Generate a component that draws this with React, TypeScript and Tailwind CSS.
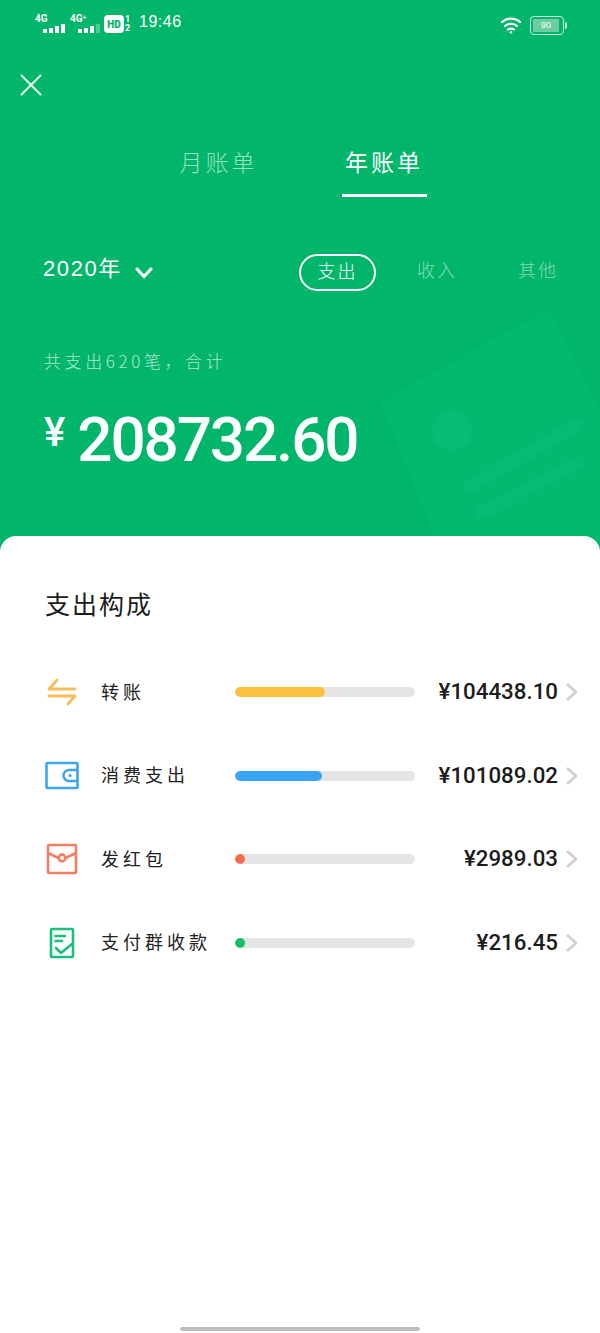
import React from "react";

const CJK = "font-['Noto_Sans_CJK_SC',sans-serif]";

const rows = [
  { name: "转账", amount: "¥104438.10", pct: "w-[50%]", bar: "bg-[#fdbf3f]", icon: "transfer" },
  { name: "消费支出", amount: "¥101089.02", pct: "w-[48.5%]", bar: "bg-[#3aa3f5]", icon: "wallet" },
  { name: "发红包", amount: "¥2989.03", pct: "w-[10px]", bar: "bg-[#f96a4f]", icon: "packet" },
  { name: "支付群收款", amount: "¥216.45", pct: "w-[10px]", bar: "bg-[#14bf6c]", icon: "bill" },
];

const RowIcon = ({ type }: { type: string }) => {
  if (type === "transfer") {
    return (
      <svg width="34" height="30" viewBox="0 0 34 30" fill="none" stroke="#f6bd5c" strokeWidth="2.8" strokeLinecap="round" strokeLinejoin="round">
        <path d="M12 3 L4 12 H30" />
        <path d="M4 19 H30 L23 27" />
      </svg>
    );
  }
  if (type === "wallet") {
    return (
      <svg width="34" height="30" viewBox="0 0 34 30" fill="none" stroke="#3fa4ee" strokeWidth="2.6" strokeLinejoin="round">
        <rect x="1.5" y="2" width="31" height="25" rx="1" />
        <path d="M32 9 H24 A5 5 0 0 0 24 20 H32" />
        <circle cx="25" cy="14.5" r="1.6" fill="#3fa4ee" stroke="none" />
      </svg>
    );
  }
  if (type === "packet") {
    return (
      <svg width="34" height="32" viewBox="0 0 34 32" fill="none" stroke="#f17f63" strokeWidth="2.6" strokeLinejoin="round">
        <rect x="3" y="2" width="28" height="28" rx="1" />
        <path d="M3 10 L13.5 15 M31 10 L20.5 15" />
        <circle cx="17" cy="15" r="3.4" />
      </svg>
    );
  }
  return (
    <svg width="34" height="32" viewBox="0 0 34 32" fill="none" stroke="#1cbf78" strokeWidth="2.6" strokeLinecap="round" strokeLinejoin="round">
      <path d="M28 19 V3 a1 1 0 0 0 -1 -1 H7 a1 1 0 0 0 -1 1 V29 a1 1 0 0 0 1 1 H27 a1 1 0 0 0 1 -1 V19" />
      <path d="M10.5 9 H20 M10.5 14 H17" />
      <path d="M11 21 L16 26 L27 17" />
    </svg>
  );
};

const Signal = ({ label, faded }: { label: string; faded?: boolean }) => (
  <div className="relative h-[20px] w-[32px]">
    <span className="absolute left-0 top-0 font-['Roboto',sans-serif] text-[10px] font-bold leading-[10px] text-white">{label}</span>
    <div className="absolute bottom-[1px] left-[8px] flex items-end gap-[2px]">
      <span className="h-[4px] w-[4px] bg-white" />
      <span className="h-[5px] w-[4px] bg-white" />
      <span className="h-[7px] w-[4px] bg-white" />
      <span className={`h-[9px] w-[4px] ${faded ? "bg-white/30" : "bg-white"}`} />
    </div>
  </div>
);

export default function App() {
  return (
    <div className={`flex h-[1333px] w-[600px] flex-col overflow-hidden bg-white ${CJK}`}>
      <div className="relative h-[550px] shrink-0 overflow-hidden bg-[#01b56b]">
        {/* faint card drawing behind the total */}
        <svg className="absolute left-[370px] top-[300px]" width="230" height="250" viewBox="0 0 230 250" fill="none">
          <path d="M10 102 L172 12 Q178 9 182 16 L230 110 V250 H70 Z" fill="#03b86f" />
          <circle cx="82" cy="130" r="20" fill="#07bc75" />
          <path d="M100 186 L206 126 M112 212 L208 163" stroke="#06bb73" strokeWidth="14" strokeLinecap="round" />
        </svg>

        <div className="relative flex h-[48px] items-center justify-between pl-[35px] pr-[33px]">
          <div className="flex items-center">
            <Signal label="4G" />
            <div className="w-[3px]" />
            <Signal label="4G⁺" faded />
            <span className="ml-[2px] flex h-[18px] w-[20px] items-center justify-center rounded-[4px] bg-white font-['Roboto',sans-serif] text-[10px] font-black text-[#01b56b]">HD</span>
            <span className="ml-[1px] flex w-[7px] flex-col font-['Roboto',sans-serif] text-[9px] font-bold leading-[9px] text-white">
              <span>1</span>
              <span>2</span>
            </span>
            <span className="ml-[7px] mb-[4px] font-['Liberation_Sans',sans-serif] text-[16px] tracking-[0.5px] text-white">19:46</span>
          </div>
          <div className="mt-[2px] flex items-center gap-[8px]">
            <svg width="22" height="18" viewBox="0 0 22 18" fill="none" stroke="white" strokeWidth="2.2" strokeLinecap="round">
              <path d="M2 6 C7 1.5 15 1.5 20 6" />
              <path d="M5 10 C8 7 14 7 17 10" />
              <path d="M8 13.5 C9.5 12.2 12.5 12.2 14 13.5" />
              <circle cx="11" cy="16.3" r="1.2" fill="white" stroke="none" />
            </svg>
            <div className="flex items-center">
              <div className="flex h-[19px] w-[34px] items-center rounded-[4px] border-[1.5px] border-[#c8f5df] p-[2px]">
                <div className="flex h-full w-[26px] items-center justify-center rounded-[1px] bg-[#6bcda0] font-['Liberation_Sans',sans-serif] text-[9px] leading-none text-white">90</div>
              </div>
              <span className="ml-[1px] h-[7px] w-[2px] rounded-r-sm bg-[#c8f5df]" />
            </div>
          </div>
        </div>

        <div className="relative pl-[20px] pt-[26px]">
          <svg width="22" height="22" viewBox="0 0 22 22" fill="none" stroke="#e8fff3" strokeWidth="2" strokeLinecap="round">
            <path d="M1.5 1.5 L20.5 20.5 M20.5 1.5 L1.5 20.5" />
          </svg>
        </div>

        <div className="relative mt-[48px] flex justify-center gap-[84px] pl-[6px]">
          <span className="text-[23px] font-light leading-[34px] tracking-[3px] text-white/60">月账单</span>
          <div className="flex flex-col items-center">
            <span className="text-[23px] leading-[34px] tracking-[3px] text-white">年账单</span>
            <span className="mt-[16px] h-[3px] w-[85px] bg-white" />
          </div>
        </div>

        <div className="relative mt-[53px] flex items-center pl-[43px] pr-[42px]">
          <span className="mb-[9px] font-['Liberation_Sans',sans-serif] text-[22px] tracking-[1.6px] text-white">2020<span className={CJK}>年</span></span>
          <svg className="ml-[12px] mt-[1px]" width="20" height="14" viewBox="0 0 20 14" fill="none" stroke="white" strokeWidth="3.2" strokeLinecap="round" strokeLinejoin="round">
            <path d="M3 3 L10 10.5 L17 3" />
          </svg>
          <div className="ml-auto flex h-[37px] w-[77px] items-center justify-center rounded-full border-2 border-white pb-[3px] text-[18px] font-light tracking-[2px] text-white">支出</div>
          <span className="ml-[41px] mb-[5px] text-[18px] font-light tracking-[2px] text-white/50">收入</span>
          <span className="ml-[61px] mb-[5px] text-[18px] font-light tracking-[2px] text-white/50">其他</span>
        </div>

        <p className="relative mt-[54px] pl-[44px] text-[17px] font-light leading-[26px] tracking-[3.6px] text-white/70">共支出620笔，合计</p>

        <div className="relative mt-[34px] flex items-start pl-[44px]">
          <span className="mt-[4px] font-['Roboto',sans-serif] text-[40px] font-medium leading-[42px] text-white">¥</span>
          <span className="ml-[12px] font-['Roboto',sans-serif] text-[62px] font-medium leading-[64px] tracking-[-2.1px] text-white">208732.60</span>
        </div>
      </div>

      <div className="relative -mt-[14px] flex flex-1 flex-col rounded-t-[16px] bg-white">
        <h2 className="pl-[45px] pt-[49px] text-[25px] font-normal leading-[36px] tracking-[2px] text-[#1c1c1c]">支出构成</h2>
        <div className="mt-[46px] flex flex-col gap-[33.5px]">
          {rows.map((r) => (
            <div key={r.name} className="flex h-[50px] items-center pl-[45px] pr-[21px]">
              <div className="flex w-[34px] shrink-0 justify-center">
                <RowIcon type={r.icon} />
              </div>
              <span className="mb-[2px] ml-[22px] w-[134px] shrink-0 text-[18px] font-normal tracking-[4px] text-[#222]">{r.name}</span>
              <div className="h-[10px] w-[180px] shrink-0 overflow-hidden rounded-full bg-[#e5e5e5]">
                <div className={`h-full rounded-full ${r.pct} ${r.bar}`} />
              </div>
              <span className="flex-1 text-right font-['Roboto',sans-serif] text-[22.3px] font-medium text-[#1c1c1c]">{r.amount}</span>
              <svg className="ml-[7px]" width="14" height="20" viewBox="0 0 14 20" fill="none" stroke="#cfcfcf" strokeWidth="2.6" strokeLinejoin="round">
                <path d="M2 2 L11 10 L2 18" />
              </svg>
            </div>
          ))}
        </div>
        <div className="mt-auto flex justify-center pb-[2px]">
          <span className="h-[4px] w-[240px] rounded-full bg-[#bdbdbd]" />
        </div>
      </div>
    </div>
  );
}
